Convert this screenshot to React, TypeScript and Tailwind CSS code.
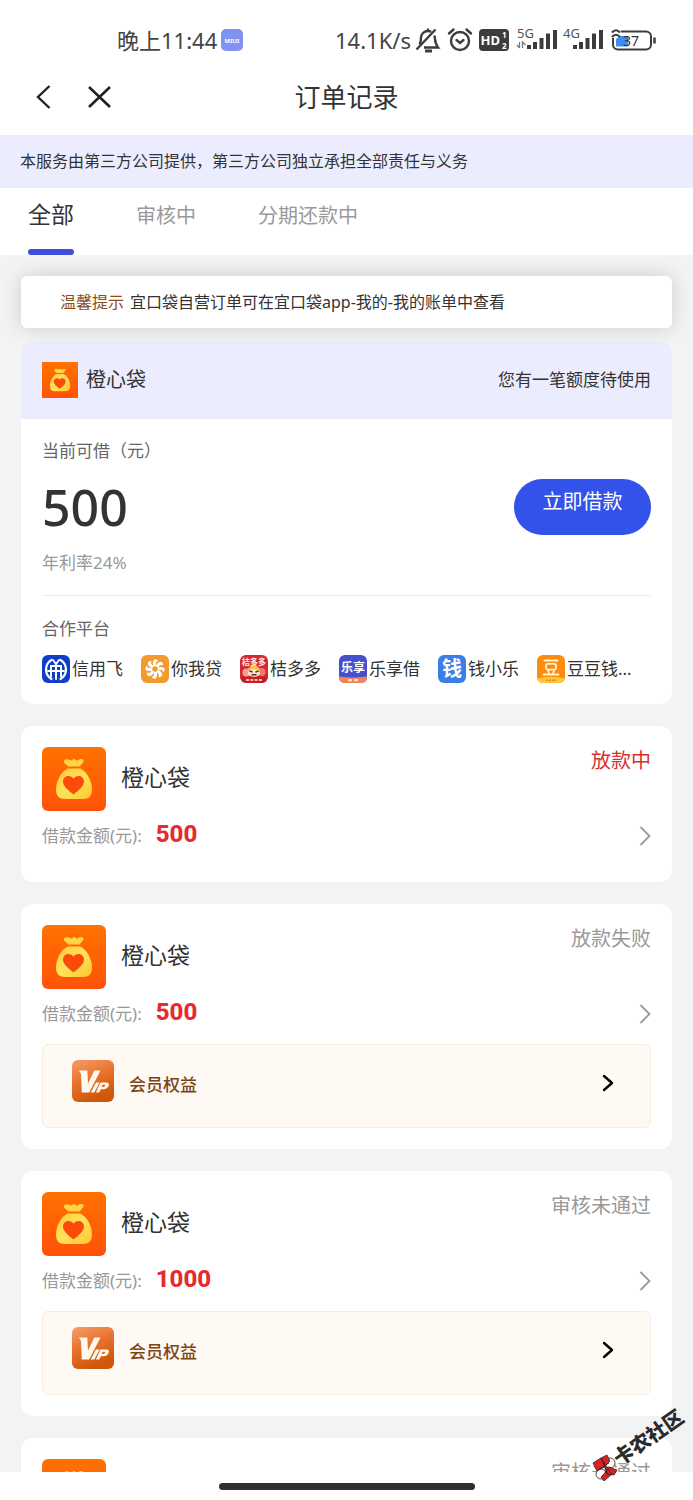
import React, { useState } from "react";

const FONT =
  "font-['Noto_Sans','Noto_Sans_CJK_SC',sans-serif]";

function BagLogo({ className }: { className: string }) {
  return (
    <svg viewBox="0 0 64 64" className={className} aria-hidden="true">
      <defs>
        <linearGradient id="bagBg" x1="0" y1="0" x2="0" y2="1">
          <stop offset="0" stopColor="#ff7200" />
          <stop offset="1" stopColor="#ff5208" />
        </linearGradient>
        <linearGradient id="bagFill" x1="0" y1="0" x2="1" y2="1">
          <stop offset="0" stopColor="#ffca3c" />
          <stop offset="0.5" stopColor="#ffe25a" />
          <stop offset="1" stopColor="#ffc52e" />
        </linearGradient>
      </defs>
      <rect width="64" height="64" fill="url(#bagBg)" />
      <path
        d="M22 14.5c0-2.500 3.500-3 5.800-1.400 1 .6 2.200.5 3.100-.5l1-1 1.400 1.200c1 .8 2 .8 3 .1 2-1.500 5-1.400 5.300.9.300 2-2.600 3-3.600 5.700H26c-.7-2.400-4.400-2.500-4-5z"
        fill="#ffd447"
      />
      <path
        d="M25.500 21.500h13c6 3 11.500 12 11.500 21 0 6.500-3 9.500-9 9.500H23c-6 0-9-3-9-9.500 0-9 5.500-18 11.500-21z"
        fill="url(#bagFill)"
      />
      <path
        d="M31.500 47.500c-4.500-3.600-10.500-8-10.500-13 0-6 7.500-7.500 10.500-3 3-4.500 10.500-3 10.500 3 0 5-6 9.400-10.500 13z"
        fill="#fb4b0b"
      />
    </svg>
  );
}

function VipLogo() {
  return (
    <svg viewBox="0 0 42 42" className="mb-1 size-[42px]" aria-hidden="true">
      <defs>
        <linearGradient id="vipBg" x1="0" y1="0" x2="0.4" y2="1">
          <stop offset="0" stopColor="#f79c6b" />
          <stop offset="0.5" stopColor="#e8732f" />
          <stop offset="1" stopColor="#cf5708" />
        </linearGradient>
      </defs>
      <rect width="42" height="42" rx="6" fill="url(#vipBg)" />
      <path
        d="M7 10.500h8.300l.7 13 6.300-13h6.200L17.200 32.500H9.800L9 14z"
        fill="#fff8ef"
      />
      <path d="M24 22.500h3.600l-5.300 10h-3.600z" fill="#fff8ef" />
      <path
        d="M28.500 22.500h5.700c2.600 0 3.400 1.700 2.300 3.700-1.100 2-2.900 3-5.300 3h-2.300l-1.700 3.300h-3.400zM30.700 24.800l-1.100 2.200h1.800c1.500 0 2.600-2.200.9-2.200z"
        fill="#fff8ef"
        fillRule="evenodd"
      />
    </svg>
  );
}

const svgFont = "'Noto Sans CJK SC', sans-serif";

function FeiIcon() {
  return (
    <>
      <rect width="28" height="28" rx="6" fill="#0f3fc9" />
      <g fill="none" stroke="#fff" strokeLinecap="round">
        <path d="M9.500 24A11 11 0 0 1 9.500 5" strokeWidth="2.200" />
        <path d="M18.500 24A11 11 0 0 0 18.500 5" strokeWidth="2.200" />
        <path d="M11 5l3 4 3-4" strokeWidth="1.800" />
        <path d="M9 21.500V11h10v10.500" strokeWidth="2" />
        <path d="M6 16h16M14 9v15" strokeWidth="2" />
      </g>
    </>
  );
}

function NiwoIcon() {
  return (
    <>
      <rect width="28" height="28" rx="6" fill="#f29a2e" />
      {[0, 45, 90, 135, 180, 225, 270, 315].map((deg) => (
        <path
          key={deg}
          transform={`rotate(${deg} 14 14)`}
          d="M12.500 11C11.500 8.500 11.500 5.600 14 4L17.500 5.500C15 6.500 14.600 8.600 15 10.800z"
          fill="#fff"
        />
      ))}
      <circle cx="14" cy="14" r="3.600" fill="none" stroke="#fff" strokeWidth="1.600" />
    </>
  );
}

function JuIcon() {
  return (
    <>
      <rect width="28" height="28" rx="6" fill="#d3282f" />
      <circle cx="6.500" cy="17.500" r="4" fill="#f0a090" />
      <circle cx="21.500" cy="17" r="4" fill="#ee7a6a" />
      <path d="M14 8l6 6-2 3h-8l-2-3z" fill="#f6c945" />
      <ellipse cx="14" cy="18" rx="6" ry="3.800" fill="#fbe7c8" />
      <path d="M9.500 16l3 1M18.500 16l-3 1M11.500 19.800h5" stroke="#5e2a1c" strokeWidth="1.400" />
      <path d="M1 22h26q-1 6-6 6H7q-5 0-6-6z" fill="#c41d27" />
      <path d="M6 25h16" stroke="#ffb9ad" strokeWidth="2" strokeDasharray="3 1.300" />
      <text x="14" y="9.500" fontSize="8" fontWeight="900" fill="#ffd9d2" textAnchor="middle" fontFamily={svgFont}>
        桔多多
      </text>
    </>
  );
}

function LeIcon() {
  return (
    <>
      <rect width="28" height="28" rx="6" fill="#4450cf" />
      <path d="M0 21.500q14 2 28 0v.5q0 6-6 6H6q-6 0-6-6z" fill="#f0835b" />
      <path d="M9 25.200h10" stroke="#ffe0cc" strokeWidth="2.200" strokeDasharray="4 2" />
      <text x="14" y="16.500" fontSize="12" fontWeight="700" fill="#fff" textAnchor="middle" fontFamily={svgFont}>
        乐享
      </text>
    </>
  );
}

function QianIcon() {
  return (
    <>
      <rect width="28" height="28" rx="6" fill="#3a7ee6" />
      <text x="14" y="21" fontSize="20" fontWeight="700" fill="#fff" textAnchor="middle" fontFamily={svgFont}>
        钱
      </text>
    </>
  );
}

function DouIcon() {
  return (
    <>
      <rect width="28" height="28" rx="6" fill="#fb8c10" />
      <path d="M0 23.500q14-3.500 28 0-1 4.500-6 4.500H6q-5 0-6-4.500z" fill="#ffc53d" />
      <path d="M9 25.300h10" stroke="#e9860f" strokeWidth="1.400" strokeDasharray="2 1" />
      <g fill="none" stroke="#fff3cf" strokeWidth="1.800" strokeLinecap="round">
        <path d="M7.500 5.500h13M6.500 19.500h15M11 15.500l1 3M17 15.500l-1 3" />
        <rect x="9" y="8.800" width="10" height="5.800" rx="1.500" />
      </g>
    </>
  );
}

const partners = [
  { name: "信用飞", Icon: FeiIcon },
  { name: "你我贷", Icon: NiwoIcon },
  { name: "桔多多", Icon: JuIcon },
  { name: "乐享借", Icon: LeIcon },
  { name: "钱小乐", Icon: QianIcon },
  { name: "豆豆钱...", Icon: DouIcon },
];

const orders = [
  { id: 1, status: "放款中", statusColor: "text-[#d9302c]", amount: "500", vip: false },
  { id: 2, status: "放款失败", statusColor: "text-[#999999]", amount: "500", vip: true },
  { id: 3, status: "审核未通过", statusColor: "text-[#999999]", amount: "1000", vip: true },
  { id: 4, status: "审核未通过", statusColor: "text-[#999999]", amount: "1000", vip: true },
];

const tabs = ["全部", "审核中", "分期还款中"];

function Signal({ label, data }: { label: string; data?: boolean }) {
  return (
    <svg viewBox="0 0 42 26" className="h-[26px] w-[42px] overflow-visible" aria-label={label}>
      <text x="0" y="11" fontSize="13" fill="#555" fontFamily="'Noto Sans', sans-serif">
        {label}
      </text>
      {data && <path d="M2.500 15v6M0 18l2.500 3M5.500 21v-6l3 3" stroke="#777" strokeWidth="1.300" fill="none" />}
      <path
        d="M12 22v-4M18 22v-7M24.500 22v-11M31 22V6.500M38 22V3"
        stroke="#3c3c3c"
        strokeWidth="4"
        strokeLinecap="butt"
      />
    </svg>
  );
}

function StatusBar() {
  return (
    <div className="flex h-[60px] shrink-0 items-center justify-between pt-5 pr-9 pl-[117px] text-[#444]">
      <div className="flex items-center gap-1">
        <span className="text-[22px]">晚上11:44</span>
        <svg viewBox="0 0 22 22" className="size-[22px]" aria-hidden="true">
          <rect width="22" height="22" rx="5" fill="#8093f3" />
          <text x="11" y="13.500" fontSize="6" fontWeight="700" fill="#fff" textAnchor="middle" fontFamily="'Noto Sans', sans-serif">
            MIUI
          </text>
        </svg>
      </div>
      <div className="flex items-center">
        <span className="text-[22px]">14.1K/s</span>
        <svg viewBox="0 0 26 26" className="ml-1 size-[26px]" fill="none" stroke="#3c3c3c" strokeWidth="2.400" aria-hidden="true">
          <path d="M1.500 22.500L20.500 2.500" />
          <path d="M4.500 17.500c1.500-2 1.500-4 1.500-6.500C6 7 9 4 13 4c1.300 0 2.300.3 3.300.8" />
          <path d="M19.500 8.500c.8 4.500.2 8 3.500 12H9" />
          <path d="M10 24h7" strokeWidth="3" />
          <path d="M13 4V1.500" />
        </svg>
        <svg viewBox="0 0 26 26" className="ml-1.5 size-[26px]" fill="none" stroke="#3c3c3c" strokeWidth="2.400" strokeLinecap="round" aria-hidden="true">
          <circle cx="13" cy="14" r="9" />
          <path d="M2 6.500L6.500 2.500M24 6.500L19.500 2.500M9.500 13l3.500 3 3.500-3" />
        </svg>
        <svg viewBox="0 0 30 22" className="ml-1.5 h-[22px] w-[30px] overflow-visible" aria-label="HD">
          <rect width="30" height="22" rx="4" fill="#3c3c3c" />
          <g fill="#fff" fontWeight="700" fontFamily="'Noto Sans', sans-serif">
            <text x="1.500" y="16" fontSize="13">HD</text>
            <text x="23" y="9" fontSize="8">1</text>
            <text x="23" y="20" fontSize="8">2</text>
          </g>
        </svg>
        <span className="ml-2 flex gap-1">
          <Signal label="5G" data />
          <Signal label="4G" />
        </span>
        <svg viewBox="0 0 46 24" className="ml-1.5 h-6 w-[46px] overflow-visible" aria-label="电量 37%">
          <rect x="2" y="3.500" width="38" height="18" rx="5" fill="none" stroke="#3c3c3c" strokeWidth="2" />
          <path d="M43.500 9.500v6" stroke="#3c3c3c" strokeWidth="2.500" />
          <path d="M0 0h10v10H0z" fill="#fff" />
          <path d="M5 11l5-3h7v10.500H5z" fill="#3b8df2" />
          <path d="M1 4.500q4-4.500 8 0M1 9q4-4.500 8 0" fill="none" stroke="#3c3c3c" strokeWidth="2.200" />
          <text x="12" y="17.500" fontSize="14" fill="#333" fontFamily="'Noto Sans', sans-serif">
            37
          </text>
        </svg>
      </div>
    </div>
  );
}

function NavBar() {
  return (
    <header className="grid h-[75px] shrink-0 grid-cols-[1fr_auto_1fr] items-center px-8 pb-0.5">
      <div className="flex items-center gap-8">
        <button type="button" aria-label="返回">
          <svg viewBox="0 0 24 28" className="h-7 w-6" fill="none" stroke="#222" strokeWidth="2.400">
            <path d="M17.500 3L6 14l11.500 11" />
          </svg>
        </button>
        <button type="button" aria-label="关闭">
          <svg viewBox="0 0 24 24" className="size-6" fill="none" stroke="#222" strokeWidth="2.600">
            <path d="M1 2l21 20M22 2L1 22" />
          </svg>
        </button>
      </div>
      <h1 className="text-[26px] leading-9 text-[#333]">订单记录</h1>
    </header>
  );
}

function QuotaCard() {
  return (
    <section className="mt-[13px] overflow-hidden rounded-xl bg-white">
      <div className="flex h-[78px] items-center justify-between bg-[#ebedff] px-[21px]">
        <div className="flex items-center gap-2">
          <BagLogo className="size-9" />
          <h2 className="text-xl text-[#333]">橙心袋</h2>
        </div>
        <p className="text-[17px] text-[#333]">您有一笔额度待使用</p>
      </div>
      <div className="px-[21px] pt-5 pb-[21px] text-[17px] leading-6">
        <p className="text-[#666]">当前可借（元）</p>
        <div className="mt-4 flex items-center justify-between">
          <span className="text-[50px] leading-[56px] font-medium text-[#333]">500</span>
          <button
            type="button"
            className="h-14 w-[137px] rounded-full bg-[#3352ea] pb-2.5 text-xl text-white"
          >
            立即借款
          </button>
        </div>
        <p className="mt-4 text-[#999]">年利率24%</p>
        <hr className="mt-5 border-[#ececec]" />
        <p className="mt-[21px] text-[#666]">合作平台</p>
        <ul className="mt-3.5 flex gap-[18px]">
          {partners.map(({ name, Icon }) => (
            <li key={name} className="flex h-7 items-center gap-0.5 whitespace-nowrap text-[#333]">
              <svg viewBox="0 0 28 28" className="size-7 shrink-0 overflow-visible" aria-hidden="true">
                <Icon />
              </svg>
              {name}
            </li>
          ))}
        </ul>
      </div>
    </section>
  );
}

function OrderCard({ order }: { order: (typeof orders)[number] }) {
  return (
    <section className="rounded-xl bg-white p-[21px]">
      <div className="flex items-start justify-between">
        <div className="flex items-center gap-[15px]">
          <BagLogo className="size-16 rounded-md" />
          <h2 className="pb-1 text-[23px] text-[#333]">橙心袋</h2>
        </div>
        <span className={`text-xl leading-7 ${order.statusColor}`}>{order.status}</span>
      </div>
      <div className="mt-[11px] mb-[11px] flex h-7 items-center justify-between">
        <p className="flex items-center gap-3.5 text-[17px] text-[#999]">
          借款金额(元):
          <span className="pb-1 font-['Roboto',sans-serif] text-2xl leading-7 font-extrabold text-[#e62a2e]">
            {order.amount}
          </span>
        </p>
        <button type="button" aria-label="查看订单">
          <svg viewBox="0 0 12 20" className="h-5 w-3" fill="none" stroke="#999" strokeWidth="1.800">
            <path d="M1.500 1L10.500 10l-9 9" />
          </svg>
        </button>
      </div>
      {order.vip && (
        <button
          type="button"
          className="mt-4 flex h-[84px] w-full items-center rounded-md border border-[#f5ede4] bg-[#fef9f2] pr-9 pb-1.5 pl-[29px]"
        >
          <VipLogo />
          <span className="mt-1 ml-[15px] text-[17px] font-medium text-[#7c4516]">会员权益</span>
          <svg viewBox="0 0 12 18" className="ml-auto h-[18px] w-3" fill="none" stroke="#000" strokeWidth="2.400" strokeLinecap="round" strokeLinejoin="round">
            <path d="M2 2l8 7-8 7" />
          </svg>
        </button>
      )}
    </section>
  );
}

function Watermark() {
  return (
    <svg
      viewBox="0 0 100 80"
      className="pointer-events-none absolute right-1 bottom-[14px] h-20 w-[100px] overflow-visible"
    >
      <g stroke="#222" strokeWidth="0.800">
        <circle cx="21" cy="57" r="5" fill="#fff" />
        <circle cx="12" cy="68" r="5" fill="#fff" />
        <path
          d="M4 57l8-5 5 8-9 5zM12 52l6-3 3 6-5 5zM16 62l4-1 8 3-3 5-7-1zM14 69l5-6 4 5-8 7-3-4z"
          fill="#e02020"
        />
        <path d="M9 64l11-7M14 56l4 11" />
      </g>
      <text
        x="59"
        y="39"
        fontSize="20"
        fontWeight="900"
        fill="#2b2b2b"
        stroke="#fff"
        strokeWidth="1"
        paintOrder="stroke"
        textAnchor="middle"
        transform="rotate(-35 59 31)"
        fontFamily={svgFont}
      >
        卡农社区
      </text>
    </svg>
  );
}

export default function App() {
  const [active, setActive] = useState("全部");

  return (
    <div className={`relative flex h-screen flex-col overflow-hidden bg-white ${FONT}`}>
      <StatusBar />
      <NavBar />
      <p className="shrink-0 bg-[#ebedff] px-5 py-3.5 text-base leading-[25px] text-[#333]">
        本服务由第三方公司提供，第三方公司独立承担全部责任与义务
      </p>
      <div role="tablist" className="flex h-[67px] shrink-0 gap-[62px] px-7">
        {tabs.map((tab) => (
          <button
            key={tab}
            type="button"
            role="tab"
            aria-selected={active === tab}
            onClick={() => setActive(tab)}
            className={
              active === tab
                ? "flex flex-col justify-between pt-2.5 text-[23px] leading-8 text-[#333]"
                : "flex flex-col justify-between pt-3 text-xl leading-8 text-[#999]"
            }
          >
            {tab}
            {active === tab && <span className="h-1.5 w-full rounded-full bg-[#3f4fdc]" />}
          </button>
        ))}
      </div>
      <main className="min-h-0 flex-1 overflow-hidden bg-[#f3f3f3] px-[21px] pt-[21px]">
        <div className="relative flex h-[52px] items-center gap-1.5 rounded-md bg-white px-[39px] text-base text-[#333] shadow-[0_0_20px_rgba(0,0,0,0.16)]">
          <span className="text-[#8a4f1d]">温馨提示</span>
          <span>宜口袋自营订单可在宜口袋app-我的-我的账单中查看</span>
        </div>
        <QuotaCard />
        <div className="mt-[22px] flex flex-col gap-[22px]">
          {orders.map((order) => (
            <OrderCard key={order.id} order={order} />
          ))}
        </div>
      </main>
      <footer className="flex h-7 shrink-0 items-center justify-center">
        <div className="h-[7px] w-64 rounded-full bg-[#2f2f2f]" />
      </footer>
      <Watermark />
    </div>
  );
}
